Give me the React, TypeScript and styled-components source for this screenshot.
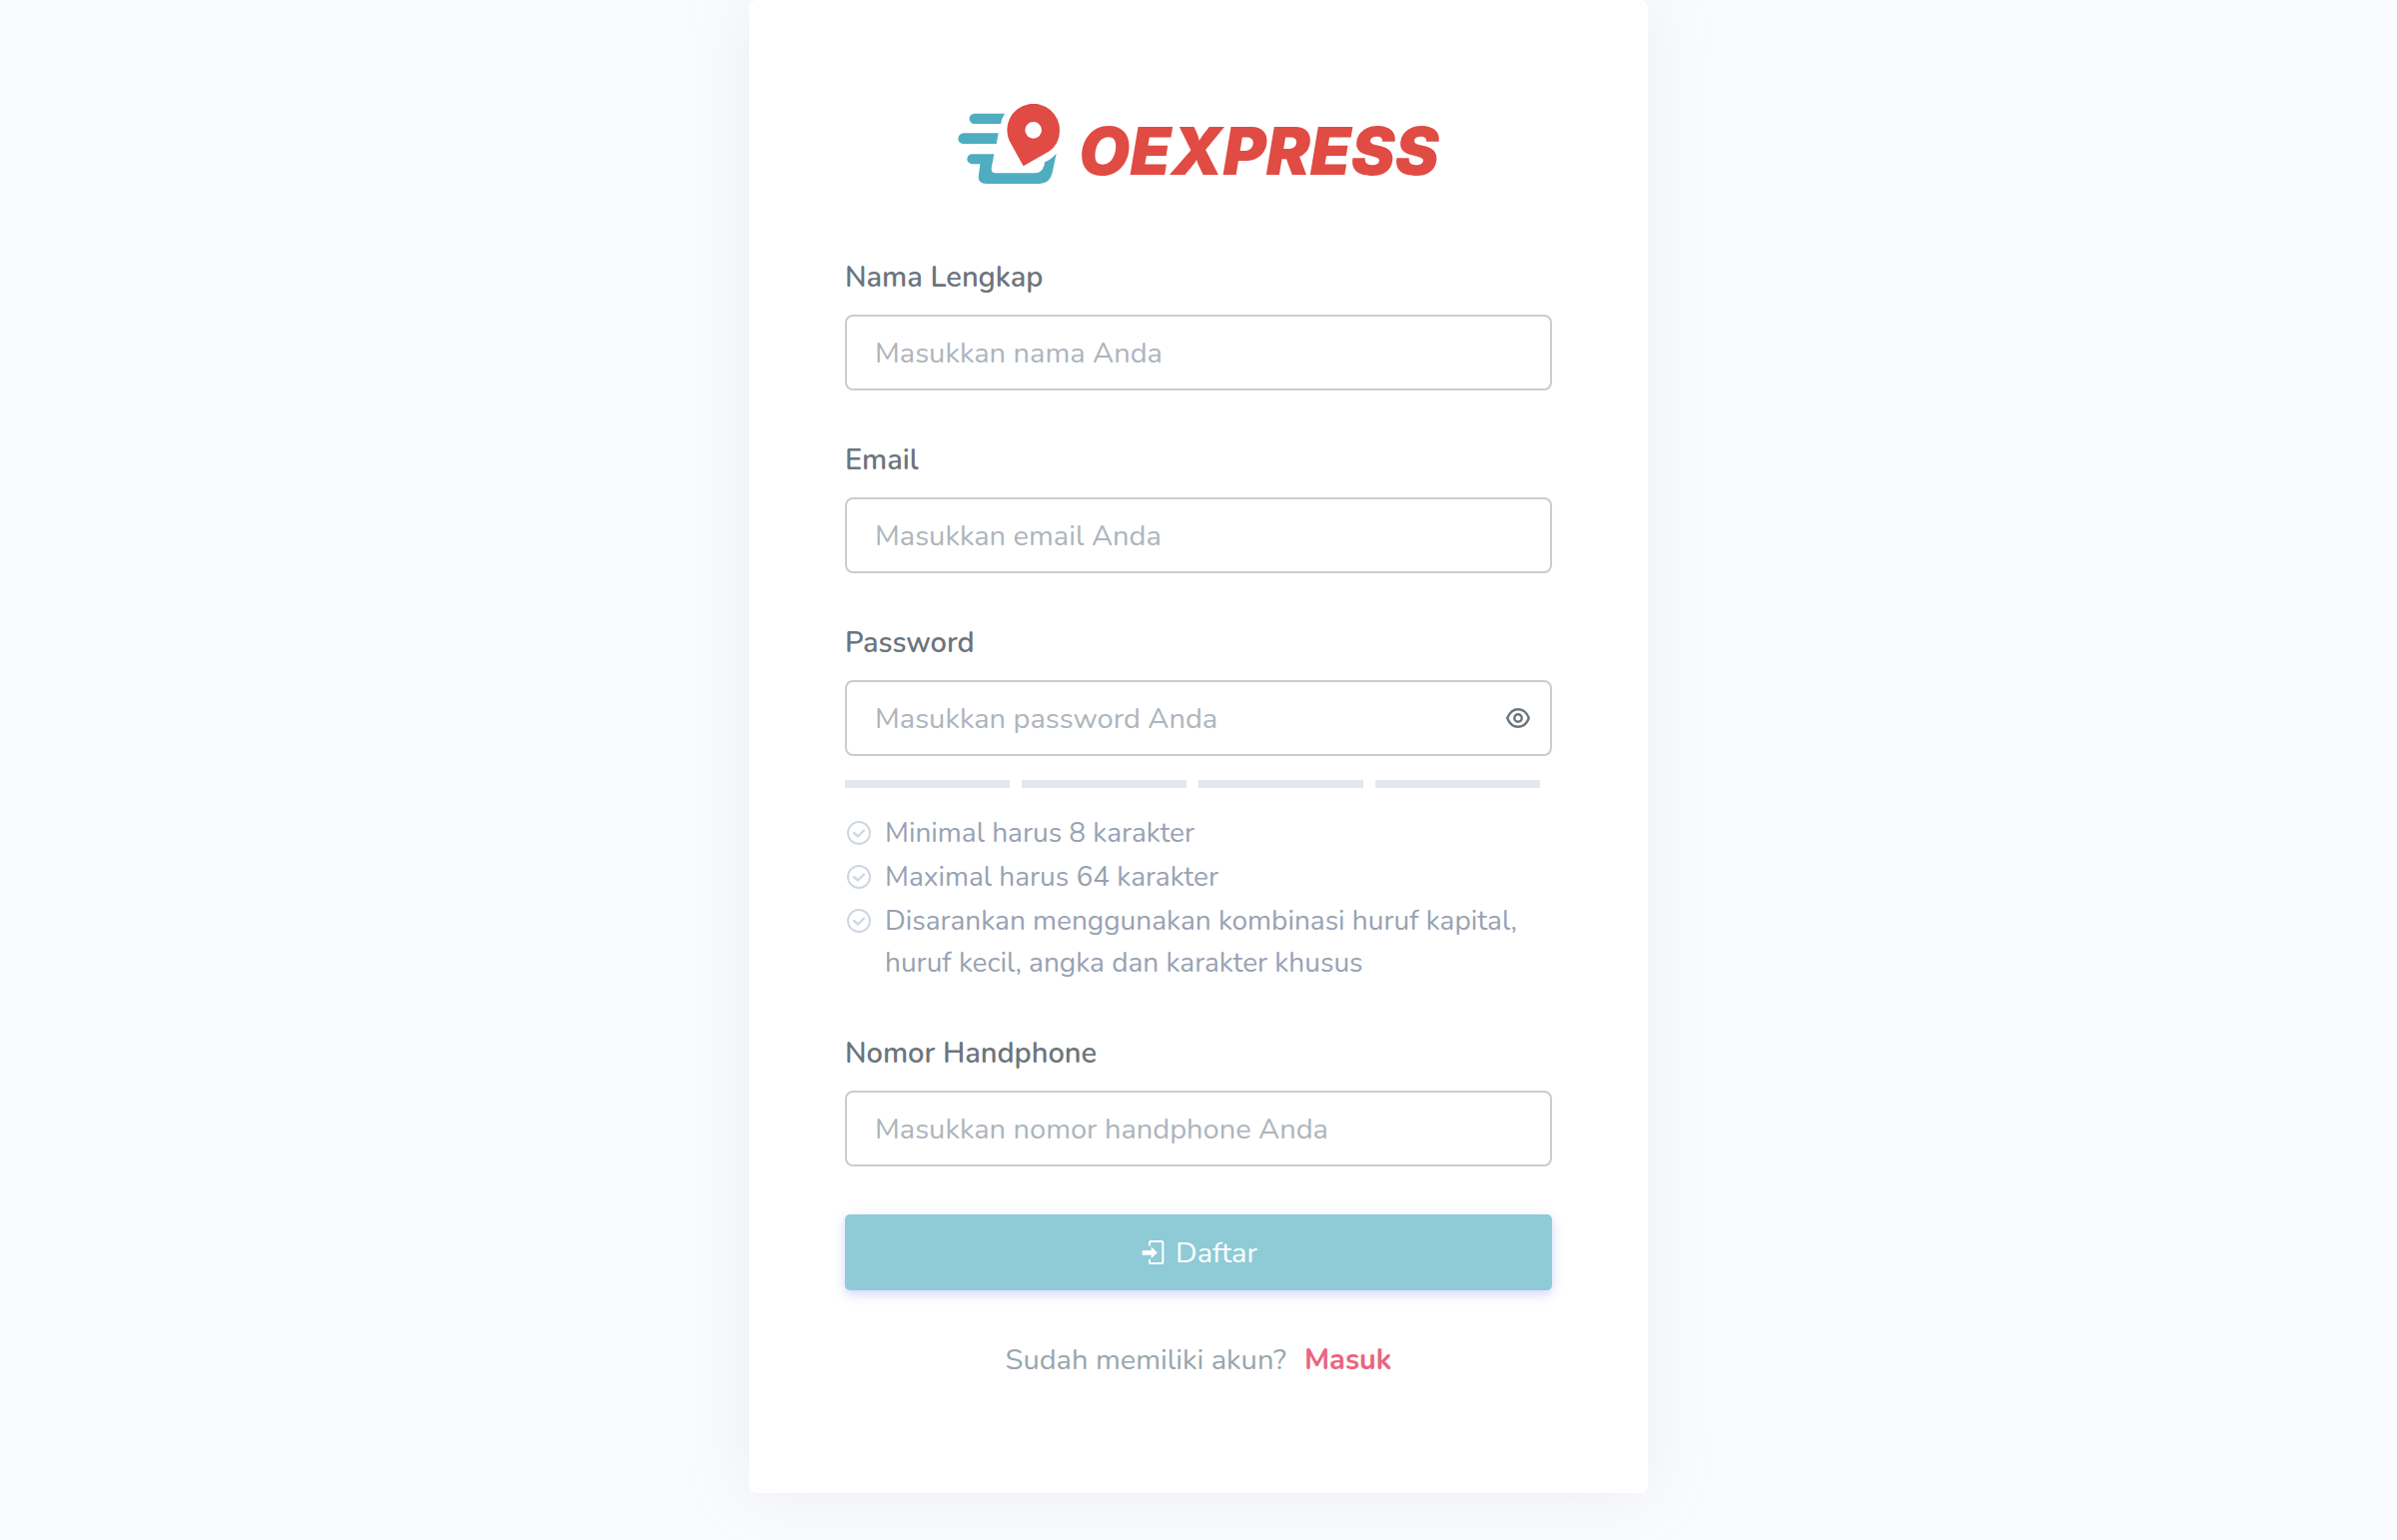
import React, { useState } from "react";
import styled, { createGlobalStyle } from "styled-components";

const GlobalStyle = createGlobalStyle`
  *, *::before, *::after { box-sizing: border-box; }
  body {
    margin: 0;
    background: #fafbfe;
    color: #6c757d;
    font-family: Nunito, Lato, sans-serif;
    font-size: 29px;
    line-height: 43px;
  }
`;

const Page = styled.main`
  display: flex;
  justify-content: center;
  align-items: flex-start;
  min-height: 100vh;
`;

const Card = styled.section`
  width: 100%;
  max-width: 900px;
  padding: 104px 96px 112px;
  border-radius: 8px;
  background: #fff;
  box-shadow: 0 0 70px rgba(154, 161, 171, 0.15);
`;

const Brand = styled.h1`
  display: flex;
  justify-content: center;
  align-items: center;
  gap: 18px;
  height: 80px;
  margin: 0 0 72px;
  color: #e04b43;
  font-family: Inter, sans-serif;
  font-size: 66px;
  font-weight: 900;
  font-style: italic;
  line-height: 80px;
`;

const BrandName = styled.span`
  padding-top: 14px;
`;

const Form = styled.form`
  display: flex;
  flex-direction: column;
  gap: 48px;
`;

const Group = styled.div`
  display: flex;
  flex-direction: column;
`;

const Label = styled.label`
  align-self: flex-start;
  margin-bottom: 16px;
  font-weight: 600;
`;

const InputFrame = styled.div`
  position: relative;
  display: flex;
`;

const Input = styled.input<{ $withToggle?: boolean }>`
  width: 100%;
  height: 76px;
  padding: 0 ${(p) => (p.$withToggle ? "72px" : "28px")} 0 28px;
  border: 2px solid #ccc;
  border-radius: 8px;
  background: #fff;
  color: #6c757d;
  font: inherit;
  outline: none;

  &::placeholder {
    color: #adb5bd;
    opacity: 1;
  }

  &:focus {
    border-color: #4fadc0;
  }
`;

const ToggleButton = styled.button`
  position: absolute;
  top: 18px;
  right: 14px;
  display: grid;
  place-items: center;
  width: 40px;
  height: 40px;
  padding: 0;
  border: 0;
  background: none;
  color: #6c757d;
  cursor: pointer;
`;

const StrengthMeter = styled.div`
  display: grid;
  grid-template-columns: repeat(4, 1fr);
  gap: 12px;
  margin-top: 24px;
  padding-right: 12px;
`;

const StrengthBar = styled.span`
  height: 8px;
  background: #e3e7ef;
`;

const RuleList = styled.ul`
  display: flex;
  flex-direction: column;
  gap: 2px;
  margin: 24px 0 0;
  padding: 0;
  list-style: none;
  color: #98a2b3;
  font-size: 28px;
  line-height: 42px;
`;

const Rule = styled.li`
  display: flex;
  gap: 12px;
`;

const RuleMark = styled.svg`
  flex: none;
  width: 28px;
  height: 42px;
  color: #cfd7e2;
`;

const SubmitButton = styled.button`
  display: flex;
  justify-content: center;
  align-items: center;
  gap: 10px;
  height: 76px;
  border: 0;
  border-radius: 5px;
  background: #8ecbd6;
  box-shadow: 0 4px 12px rgba(114, 124, 245, 0.32);
  color: #fff;
  font: inherit;
  cursor: pointer;
`;

const Footer = styled.p`
  display: flex;
  justify-content: center;
  gap: 18px;
  margin: 48px 0 0;
  color: #98a6ad;
`;

const LoginLink = styled.a`
  color: #ea657f;
  font-weight: 700;
  text-decoration: none;
`;

const BrandMark = () => (
  <svg width="103" height="80" viewBox="26 18 309 240" aria-hidden="true">
    <g fill="#4fadc0">
      <path d="M76 47H167Q158 60 155 78H76A15.500 15.500 0 0 1 76 47Z" />
      <path d="M43 106H148L142 138H43A16 16 0 0 1 43 106Z" />
      <path d="M69 169H135L127 211Q126 226 139 226H256Q280 226 286 200L287 193Q308 184 322 167L310 224Q302 258 271 258H111Q88 258 88 237L93 199H69A15 15 0 0 1 69 169Z" />
    </g>
    <path
      fill="#e04b43"
      fillRule="evenodd"
      d="M223 205L181 129A79 79 0 1 1 332 98Q332 139 299 161ZM253 72A25 25 0 1 0 253 122A25 25 0 1 0 253 72Z"
    />
  </svg>
);

const EyeIcon = () => (
  <svg width="24" height="20" viewBox="0 0 24 20" fill="none" stroke="currentColor" strokeWidth="2.400" aria-hidden="true">
    <path d="M1.200 10C3.500 4.200 7.400 1.200 12 1.200S20.500 4.200 22.800 10C20.500 15.800 16.600 18.800 12 18.800S3.500 15.800 1.200 10Z" strokeLinejoin="round" />
    <circle cx="12" cy="10" r="3.700" />
  </svg>
);

const EnterIcon = () => (
  <svg width="26" height="24" viewBox="36 27 78 72" aria-hidden="true">
    <path
      d="M66 43V34Q66 30 70 30H102Q106 30 106 34V92Q106 96 102 96H70Q66 96 66 92V84"
      fill="none"
      stroke="currentColor"
      strokeWidth="6"
    />
    <path d="M44 57H71V46L89 64L71 82V71H44Z" fill="currentColor" />
  </svg>
);

const CheckMark = () => (
  <RuleMark viewBox="0 0 28 42" fill="none" stroke="currentColor" strokeWidth="2" strokeLinecap="round" strokeLinejoin="round" aria-hidden="true">
    <circle cx="14" cy="21" r="11" />
    <path d="M9 21L13 24.500L19 18.500" strokeWidth="2.400" />
  </RuleMark>
);

const rules = [
  "Minimal harus 8 karakter",
  "Maximal harus 64 karakter",
  "Disarankan menggunakan kombinasi huruf kapital, huruf kecil, angka dan karakter khusus",
];

type FieldProps = { id: string; label: string; type: string; placeholder: string };

const Field = ({ id, label, type, placeholder }: FieldProps) => (
  <Group>
    <Label htmlFor={id}>{label}</Label>
    <Input id={id} name={id} type={type} placeholder={placeholder} />
  </Group>
);

const PasswordField = () => {
  const [visible, setVisible] = useState(false);
  return (
    <Group>
      <Label htmlFor="password">Password</Label>
      <InputFrame>
        <Input
          id="password"
          name="password"
          type={visible ? "text" : "password"}
          placeholder="Masukkan password Anda"
          $withToggle
        />
        <ToggleButton type="button" aria-label="Tampilkan password" aria-pressed={visible} onClick={() => setVisible(!visible)}>
          <EyeIcon />
        </ToggleButton>
      </InputFrame>
      <StrengthMeter aria-hidden="true">
        <StrengthBar />
        <StrengthBar />
        <StrengthBar />
        <StrengthBar />
      </StrengthMeter>
      <RuleList>
        {rules.map((rule) => (
          <Rule key={rule}>
            <CheckMark />
            <span>{rule}</span>
          </Rule>
        ))}
      </RuleList>
    </Group>
  );
};

export default function App() {
  return (
    <>
      <GlobalStyle />
      <Page>
        <Card>
          <Brand>
            <BrandMark />
            <BrandName>OEXPRESS</BrandName>
          </Brand>
          <Form onSubmit={(event) => event.preventDefault()}>
            <Field id="name" label="Nama Lengkap" type="text" placeholder="Masukkan nama Anda" />
            <Field id="email" label="Email" type="email" placeholder="Masukkan email Anda" />
            <PasswordField />
            <Field id="phone" label="Nomor Handphone" type="tel" placeholder="Masukkan nomor handphone Anda" />
            <SubmitButton type="submit">
              <EnterIcon />
              Daftar
            </SubmitButton>
          </Form>
          <Footer>
            Sudah memiliki akun? <LoginLink href="#masuk">Masuk</LoginLink>
          </Footer>
        </Card>
      </Page>
    </>
  );
}
